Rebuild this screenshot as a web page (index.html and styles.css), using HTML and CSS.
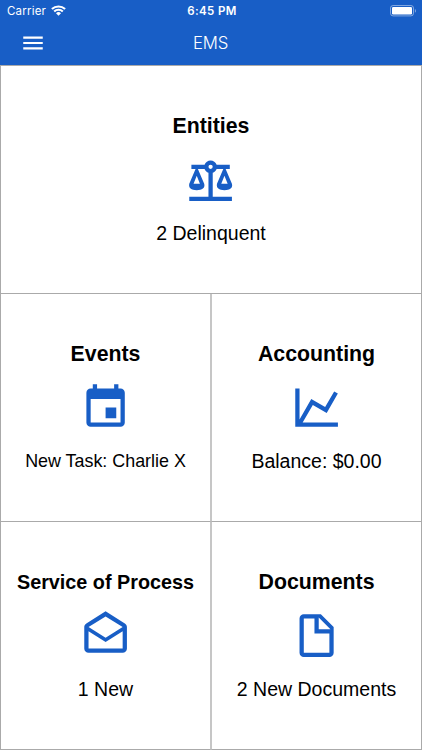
FILE: index.html
```html
<!DOCTYPE html>
<html lang="en">
<head>
    <meta charset="UTF-8">
    <meta name="viewport" content="width=device-width, initial-scale=1.0">
    <title>EMS</title>
    <link rel="stylesheet" href="styles.css">
</head>
<body>
    <header class="header">
        <div class="status-bar">
            <div class="carrier">
                <span>Carrier</span>
                <svg class="wifi" viewBox="0 0 15 11">
                    <path d="M0.9 4.1a9.5 9.5 0 0 1 13.2 0M3.2 6.5a6.2 6.2 0 0 1 8.6 0" fill="none" stroke="#fff" stroke-width="2.1"/>
                    <path d="M7.5 10.8L5 8.3a3.5 3.5 0 0 1 5 0z" fill="#fff"/>
                </svg>
            </div>
            <div class="time">6:45 PM</div>
            <div class="battery">
                <svg viewBox="0 0 27 12">
                    <rect x="0.5" y="0.5" width="23" height="10.4" rx="2.6" fill="none" stroke="#fff" stroke-opacity="0.45"/>
                    <rect x="2" y="2" width="20" height="7.4" rx="1.2" fill="#fff"/>
                    <path d="M24.9 4v3.8c1.5-.6 1.5-3.2 0-3.8z" fill="#fff" fill-opacity="0.45"/>
                </svg>
            </div>
        </div>
        <div class="nav-bar">
            <svg class="menu" viewBox="0 0 24 24"><path d="M3,6H21V8H3V6M3,11H21V13H3V11M3,16H21V18H3V16Z"/></svg>
            <div class="nav-title">EMS</div>
        </div>
    </header>
    <main class="tiles">
        <div class="tile wide">
            <h2>Entities</h2>
            <svg class="icon" viewBox="0 0 24 24"><path d="M12,3C10.73,3 9.6,3.8 9.18,5H3V7H4.95L2,14C1.53,16 3,17 5.5,17C8,17 9.56,16 9,14L6.05,7H9.17C9.5,7.85 10.15,8.5 11,8.83V20H2V22H22V20H13V8.82C13.85,8.5 14.5,7.85 14.82,7H17.95L15,14C14.53,16 16,17 18.5,17C21,17 22.56,16 22,14L19.05,7H21V5H14.83C14.4,3.8 13.27,3 12,3M12,5A1,1 0 0,1 13,6A1,1 0 0,1 12,7A1,1 0 0,1 11,6A1,1 0 0,1 12,5M5.5,10.25L7,14H4L5.5,10.25M18.5,10.25L20,14H17L18.5,10.25Z"/></svg>
            <p>2 Delinquent</p>
        </div>
        <div class="tile left">
            <h2>Events</h2>
            <svg class="icon" viewBox="0 0 24 24"><path d="M19,19H5V8H19M16,1V3H8V1H6V3H5C3.89,3 3,3.89 3,5V19A2,2 0 0,0 5,21H19A2,2 0 0,0 21,19V5C21,3.89 20.1,3 19,3H18V1M17,12H12V17H17V12Z"/></svg>
            <p class="small-text">New Task: Charlie X</p>
        </div>
        <div class="tile right">
            <h2>Accounting</h2>
            <svg class="icon" viewBox="0 0 24 24"><path d="M16,11.78L20.24,4.45L21.97,5.45L16.74,14.5L10.23,10.75L5.46,19H22V21H2V3H4V17.54L9.5,8L16,11.78Z"/></svg>
            <p>Balance: $0.00</p>
        </div>
        <div class="tile left">
            <h2 class="small-title">Service of Process</h2>
            <svg class="icon" viewBox="0 0 24 24"><path d="M21.03,6.29L12,0.64L2.97,6.29C2.39,6.64 2,7.27 2,8V18A2,2 0 0,0 4,20H20A2,2 0 0,0 22,18V8C22,7.27 21.61,6.64 21.03,6.29M20,18H4V10L12,15L20,10V18M12,13L4,8L12,3L20,8L12,13Z" fill-rule="evenodd"/></svg>
            <p>1 New</p>
        </div>
        <div class="tile right">
            <h2>Documents</h2>
            <svg class="icon" viewBox="0 0 24 24"><path d="M13,9H18.5L13,3.5V9M6,2H14L20,8V20A2,2 0 0,1 18,22H6C4.89,22 4,21.1 4,20V4C4,2.89 4.89,2 6,2M11,4H6V20H18V11H11V4Z" fill-rule="evenodd"/></svg>
            <p>2 New Documents</p>
        </div>
    </main>
</body>
</html>
```
FILE: styles.css
```css
* {
    box-sizing: border-box;
}
body {
    margin: 0;
    height: 750px;
    overflow: hidden;
    display: flex;
    flex-direction: column;
    background-color: #fff;
    color: #000;
    font-family: "Liberation Sans", Arial, sans-serif;
}
svg {
    display: block;
}
.header {
    height: 65px;
    background-color: #185ec6;
    color: #fff;
    font-family: Inter, sans-serif;
}
.status-bar {
    display: grid;
    grid-template-columns: 1fr auto 1fr;
    align-items: center;
    height: 22px;
    padding: 0 5px 0 7px;
    font-size: 11.5px;
}
.carrier {
    display: flex;
    align-items: center;
    gap: 5px;
    letter-spacing: 0.2px;
}
.wifi {
    width: 15px;
    height: 11px;
    margin-bottom: 1px;
}
.time {
    font-weight: 600;
    letter-spacing: 0.4px;
}
.battery {
    justify-self: end;
    width: 27px;
    height: 12px;
}
.nav-bar {
    display: grid;
    grid-template-columns: 1fr auto 1fr;
    align-items: center;
    height: 42px;
    padding: 0 21px 0 20px;
}
.menu {
    width: 26px;
    height: 26px;
    fill: #fff;
}
.nav-title {
    font-size: 16.8px;
    font-weight: 300;
    letter-spacing: -0.2px;
}
.tiles {
    display: grid;
    grid-template-columns: 211px 211px;
    grid-template-rows: 228px 228px 228px;
    height: 685px;
    border-top: 1px solid #aaa;
}
.tile {
    display: flex;
    flex-direction: column;
    align-items: center;
    padding-top: 47px;
    border: 1px solid #aaa;
    border-top: none;
}
.wide {
    grid-column: span 2;
}
.left {
    border-right-color: #c6c6c6;
}
.right {
    border-left-color: #c6c6c6;
}
.tile h2 {
    margin: 0;
    font-size: 21.3px;
    line-height: 26px;
}
.tile .small-title {
    font-size: 19.8px;
}
.icon {
    width: 51.2px;
    height: 51.2px;
    margin-top: 15px;
    fill: #185ec6;
}
.tile p {
    margin: 16px 0 0;
    font-size: 19.5px;
    line-height: 24px;
}
.tile .small-text {
    font-size: 17.9px;
}
```
